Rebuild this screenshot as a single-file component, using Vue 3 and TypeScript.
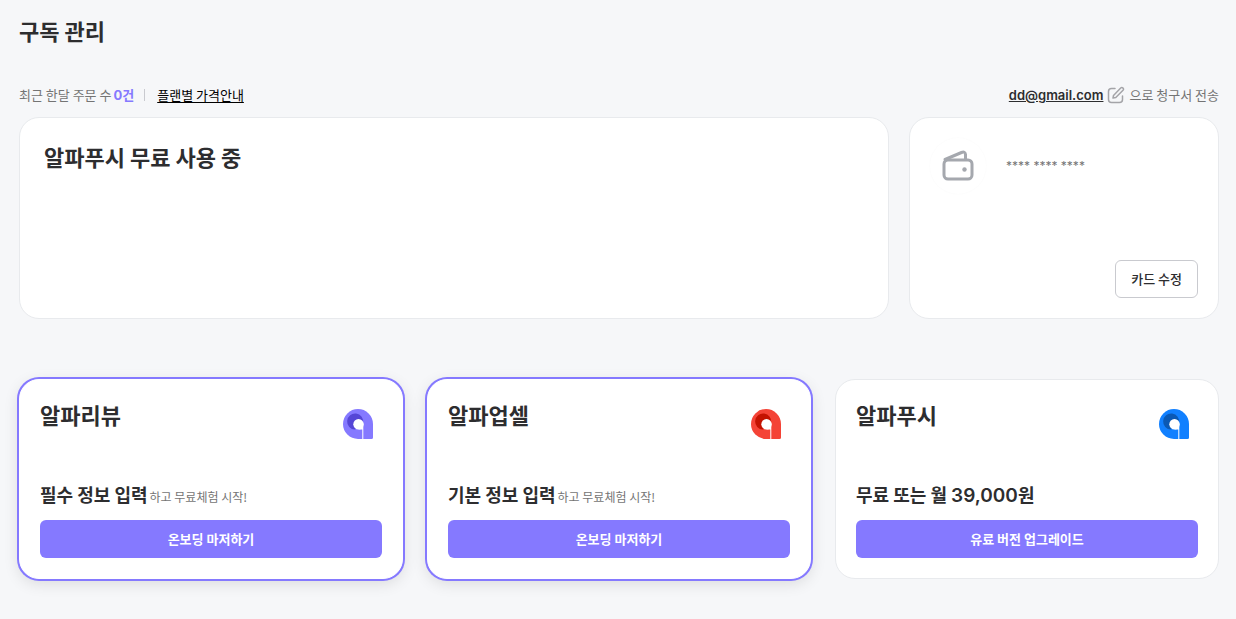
<script setup lang="ts">
interface Plan {
  name: string
  main: string
  price?: string
  unit?: string
  note?: string
  action: string
  active: boolean
  color: string
  shade: string
}

const plans: Plan[] = [
  { name: '알파리뷰', main: '필수 정보 입력', note: '하고 무료체험 시작!', action: '온보딩 마저하기', active: true, color: '#8579ff', shade: '#5546d6' },
  { name: '알파업셀', main: '기본 정보 입력', note: '하고 무료체험 시작!', action: '온보딩 마저하기', active: true, color: '#f44336', shade: '#c41200' },
  { name: '알파푸시', main: '무료 또는 월 ', price: '39,000', unit: '원', action: '유료 버전 업그레이드', active: false, color: '#1180ff', shade: '#0b59b4' },
]
</script>

<template>
  <main class="page">
    <h1 class="title">구독 관리</h1>

    <div class="info">
      <div class="info-left">
        <span>최근 한달 주문 수</span>
        <strong class="count"><span class="latin">0</span>건</strong>
        <span class="divider"></span>
        <a class="guide" href="#">플랜별 가격안내</a>
      </div>
      <div class="info-right">
        <a class="email latin" href="#">dd@gmail.com</a>
        <button class="edit" type="button" aria-label="이메일 수정">
          <svg viewBox="0 0 18 18" width="18" height="18" fill="none" stroke="#a4a4a8" stroke-width="1.5" stroke-linecap="round" stroke-linejoin="round">
            <path d="M8 2.500H4.500Q1.500 2.500 1.500 5.500V13.500Q1.500 16.500 4.500 16.500H12.500Q15.500 16.500 15.500 13.500V10" />
            <path d="M6.500 9.500 13.700 2.100Q14.800 1 16 2.100 17 3.200 16 4.300L8.800 11.500 6 12Z" />
          </svg>
        </button>
        <span>으로 청구서 전송</span>
      </div>
    </div>

    <div class="summary">
      <section class="card current">
        <h2 class="heading">알파푸시 무료 사용 중</h2>
      </section>
      <section class="card payment">
        <div class="method">
          <span class="wallet">
            <svg viewBox="0 0 32 32" width="32" height="32" fill="none" stroke="#a5a8ae" stroke-width="3" stroke-linejoin="round" stroke-linecap="round">
              <rect x="2" y="10" width="28" height="19" rx="4" />
              <path d="M3 9.500 19.500 2.500Q23 1 23.500 4.500V9" />
              <circle cx="22.500" cy="19.500" r="2.200" fill="#a5a8ae" stroke="none" />
            </svg>
          </span>
          <span class="number latin">**** **** ****</span>
        </div>
        <button class="modify" type="button">카드 수정</button>
      </section>
    </div>

    <div class="plans">
      <section v-for="plan in plans" :key="plan.name" class="card plan" :class="{ active: plan.active }">
        <div class="plan-head">
          <h2 class="heading">{{ plan.name }}</h2>
          <svg class="logo" viewBox="0 0 30 30" width="30" height="30">
            <path d="M15 0A15 15 0 0 1 30 15V28.500Q30 30 28.500 30H15A15 15 0 0 1 15 0Z" :fill="plan.color" />
            <path d="M20 14A8 8 0 1 0 12 20.500Z" :fill="plan.shade" />
            <circle cx="15.500" cy="15.200" r="5.200" fill="#fff" />
            <path d="M19.500 14H20.300V30H19.300V20.400H15.500Z" fill="#fff" />
          </svg>
        </div>
        <div class="plan-foot">
          <p class="offer">
            <strong class="main">{{ plan.main }}<span v-if="plan.price" class="price latin">{{ plan.price }}</span>{{ plan.unit }}</strong>
            <span v-if="plan.note" class="note">{{ plan.note }}</span>
          </p>
          <button class="action" type="button">{{ plan.action }}</button>
        </div>
      </section>
    </div>
  </main>
</template>

<style>
body {
  margin: 0;
  background: #f6f7f9;
}
</style>

<style scoped>
.page {
  box-sizing: border-box;
  min-height: 100vh;
  padding: 16px 17px 38px 19px;
  color: #2d2d2f;
  background: #f6f7f9;
  font-family: "Noto Sans CJK KR", sans-serif;
  font-size: 13px;
  line-height: 20px;
}
.latin {
  font-family: Inter, "Noto Sans CJK KR", sans-serif;
}
h1,
h2,
p {
  margin: 0;
}
a {
  color: inherit;
}
button {
  font-family: inherit;
  cursor: pointer;
}
.title,
.heading {
  font-size: 22px;
  line-height: 28px;
  font-weight: 700;
}
.info {
  display: flex;
  justify-content: space-between;
  margin-top: 41px;
  color: #747474;
}
.info-left,
.info-right {
  display: flex;
  align-items: center;
  gap: 4px;
}
.info-left {
  gap: 2px;
}
.count {
  color: #8579ff;
  font-weight: 700;
}
.divider {
  width: 1px;
  height: 12px;
  margin: 0 10px 0 8px;
  background: #c9cacf;
}
.guide {
  color: #000;
  text-underline-offset: 2px;
}
.email {
  color: #2d2d2f;
  font-weight: 600;
}
.edit {
  display: flex;
  padding: 0;
  border: 0;
  background: none;
}
.card {
  box-sizing: border-box;
  border: 1px solid #e8eaed;
  border-radius: 20px;
  background: #fff;
}
.summary {
  display: grid;
  grid-template-columns: 1fr 310px;
  gap: 20px;
  margin-top: 12px;
}
.current {
  min-height: 202px;
  padding: 24px;
}
.payment {
  display: flex;
  flex-direction: column;
  justify-content: space-between;
  padding: 20px;
}
.method {
  display: flex;
  align-items: center;
  gap: 20px;
}
.wallet {
  display: flex;
  align-items: center;
  justify-content: center;
  width: 56px;
  height: 56px;
  border-radius: 50%;
  box-shadow: 0 0 2px #00000008;
}
.number {
  color: #747474;
  font-size: 12px;
}
.modify {
  align-self: flex-end;
  height: 38px;
  padding: 0 15px 2px;
  border: 1px solid #c9cacf;
  border-radius: 6px;
  color: #2d2d2f;
  background: #fff;
  font-size: 13px;
  font-weight: 500;
}
.plans {
  display: grid;
  grid-template-columns: repeat(3, 1fr);
  gap: 24px;
  margin-top: 60px;
}
.plan {
  display: flex;
  flex-direction: column;
  justify-content: space-between;
  min-height: 200px;
  padding: 20px;
}
.active {
  border-color: #fff;
  box-shadow: 0 0 0 2px #8579ff, 0 4px 16px #0000001f;
}
.plan-head {
  display: flex;
  justify-content: space-between;
}
.logo {
  margin: 9px 9px 0 0;
}
.offer {
  display: flex;
  align-items: baseline;
  gap: 2px;
}
.main {
  font-size: 18px;
  line-height: 28px;
  font-weight: 700;
  white-space: pre;
}
.price {
  font-size: 19px;
  line-height: 20px;
  font-weight: 600;
}
.note {
  color: #747474;
  font-size: 12px;
  line-height: 16px;
}
.action {
  width: 100%;
  height: 38px;
  margin-top: 12px;
  padding: 0 0 2px;
  border: 0;
  border-radius: 6px;
  color: #fff;
  background: #8579ff;
  font-size: 13px;
  font-weight: 700;
}
</style>
